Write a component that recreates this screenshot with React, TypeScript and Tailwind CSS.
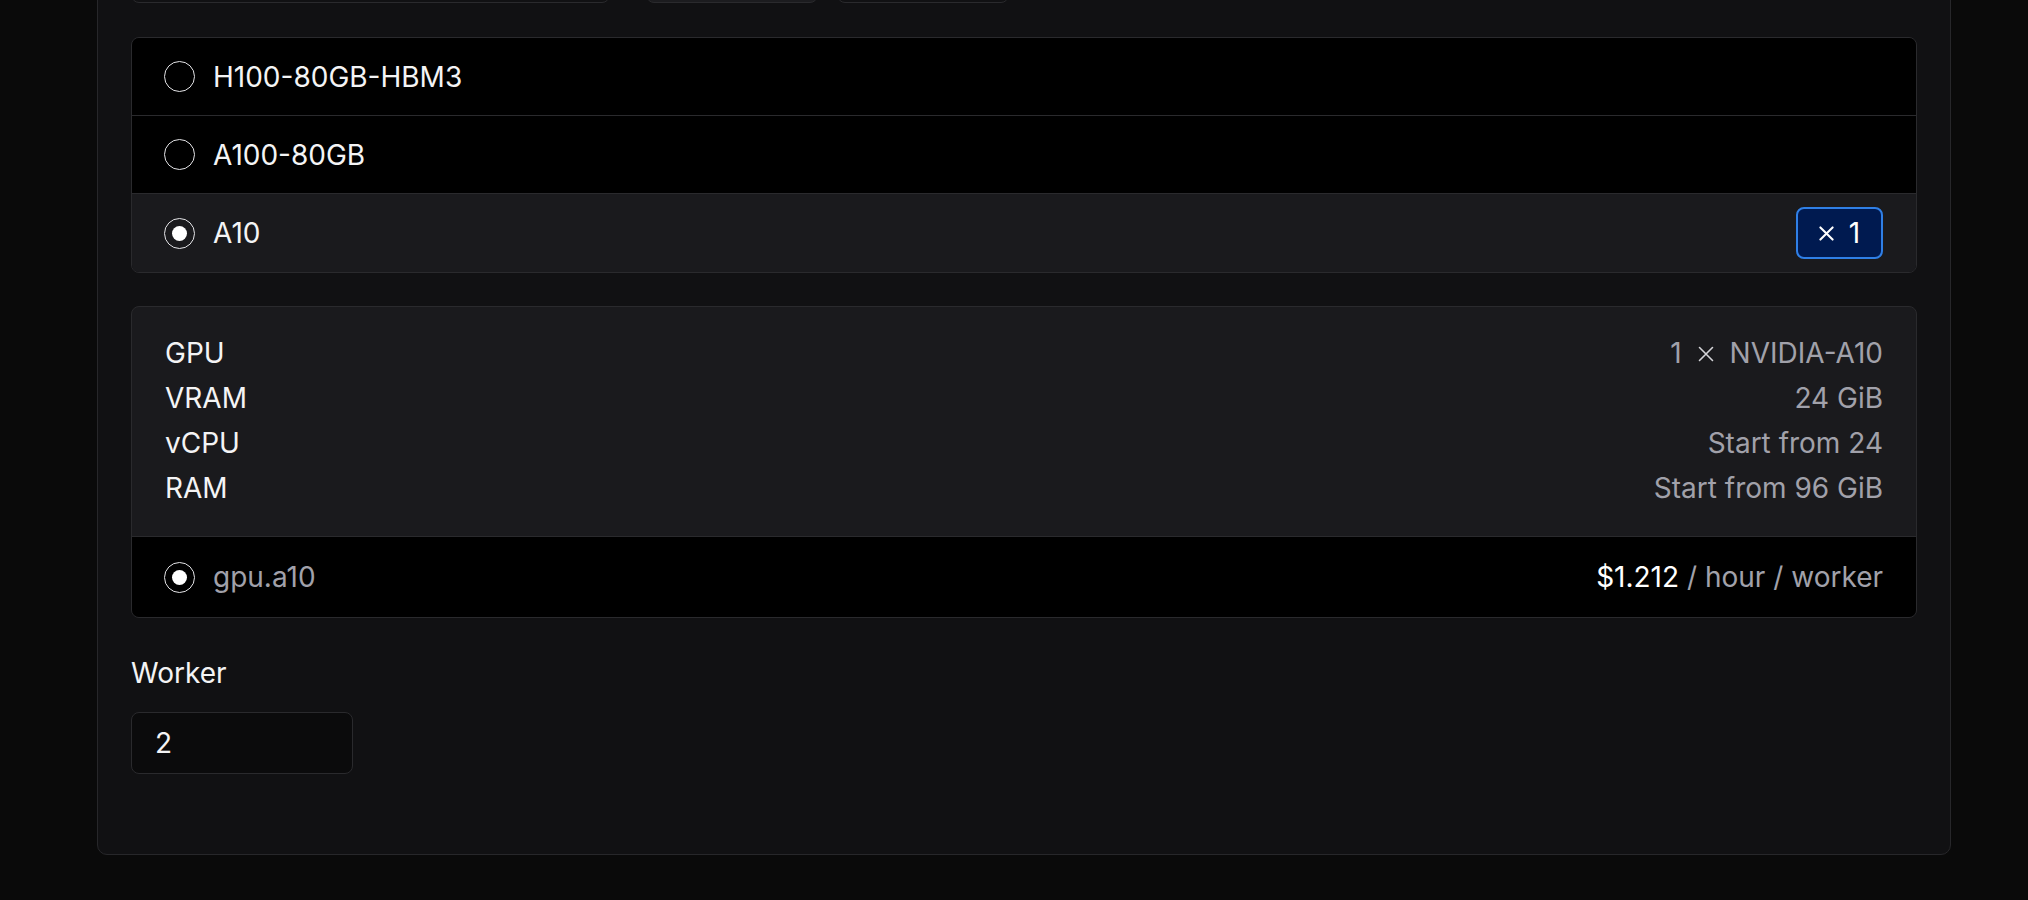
import { X } from "lucide-react";

type Gpu = { id: string; label: string };

const GPUS: Gpu[] = [
  { id: "h100", label: "H100-80GB-HBM3" },
  { id: "a100", label: "A100-80GB" },
  { id: "a10", label: "A10" },
];

const SPECS = [
  { k: "GPU", v: null },
  { k: "VRAM", v: "24 GiB" },
  { k: "vCPU", v: "Start from 24" },
  { k: "RAM", v: "Start from 96 GiB" },
];

function Radio({ checked }: { checked?: boolean }) {
  return (
    <span className="flex h-[31px] w-[31px] shrink-0 items-center justify-center rounded-full border-[1.5px] border-[#e4e4e7]">
      {checked && <span className="h-[15px] w-[15px] rounded-full bg-white" />}
    </span>
  );
}

function Cross({ className }: { className?: string }) {
  return (
    <svg viewBox="0 0 16 16" className={className} fill="none" stroke="currentColor" strokeLinecap="round">
      <path d="M1.5 1.5 14.5 14.5M14.5 1.5 1.5 14.5" />
    </svg>
  );
}

export default function App() {
  const selected = "a10";

  return (
    <div
      className="h-[900px] overflow-hidden bg-[#0a0a0a] pl-[97px] pr-[77px] text-[28px] text-[#f4f4f5]"
      style={{ fontFamily: "Inter, 'Noto Sans', sans-serif" }}
    >
      <div className="-mt-[60px] rounded-b-[10px] border border-[#27272a] bg-[#111113] px-[33px] pt-[20px] pb-[80px]">
        {/* inputs above, cut off by the viewport */}
        <div className="flex">
          <div className="h-[42px] w-[479px] rounded-[8px] border border-[#2a2a2d] bg-[#111113]" />
          <div className="ml-[36px] h-[42px] w-[172px] rounded-[8px] border border-[#2a2a2d] bg-[#1c1c1f]" />
          <div className="ml-[19px] h-[42px] w-[172px] rounded-[8px] border border-[#2a2a2d] bg-[#111113]" />
        </div>

        <div className="mt-[34px] divide-y divide-[#2a2a2d] overflow-hidden rounded-[8px] border border-[#2a2a2d]">
          {GPUS.map((g) => {
            const on = g.id === selected;
            return (
              <div
                key={g.id}
                className={`flex h-[78px] items-center gap-[18px] pl-[32px] pr-[33px] ${on ? "bg-[#1a1a1d]" : "bg-black"}`}
              >
                <Radio checked={on} />
                <span className="leading-none">{g.label}</span>
                {on && (
                  <span className="ml-auto flex h-[52px] w-[87px] items-center justify-center gap-[15px] rounded-[8px] border-2 border-[#2f7fe6] bg-[#001a50] text-white">
                    <Cross className="h-[15px] w-[15px] stroke-[2.2]" />
                    <span className="leading-none">1</span>
                  </span>
                )}
              </div>
            );
          })}
        </div>

        <div className="mt-[33px] overflow-hidden rounded-[8px] border border-[#2a2a2d] bg-[#1a1a1d]">
          <div className="px-[33px] pt-[24px] pb-[25px]">
            {SPECS.map((s) => (
              <div key={s.k} className="flex h-[45px] items-center justify-between leading-[45px]">
                <span>{s.k}</span>
                {s.v === null ? (
                  <span className="flex items-center gap-[16px] text-[#a1a1aa]">
                    <span>1</span>
                    <Cross className="h-[16px] w-[16px] stroke-[1.6] text-[#d4d4d8]" />
                    <span>NVIDIA-A10</span>
                  </span>
                ) : (
                  <span className="text-[#a1a1aa]">{s.v}</span>
                )}
              </div>
            ))}
          </div>
          <div className="flex h-[81px] items-center gap-[18px] border-t border-[#2a2a2d] bg-black pl-[32px] pr-[33px]">
            <Radio checked />
            <span className="text-[#a1a1aa]">gpu.a10</span>
            <span className="ml-auto">
              <span className="text-white">$1.212</span>
              <span className="text-[#a1a1aa]"> / hour / worker</span>
            </span>
          </div>
        </div>

        <div className="mt-[35px] leading-[40px]">Worker</div>
        <div className="mt-[19px] flex h-[62px] w-[222px] items-center rounded-[8px] border border-[#2a2a2d] bg-[#0b0b0c] px-[23px]">
          <span>2</span>
        </div>
      </div>
    </div>
  );
}
